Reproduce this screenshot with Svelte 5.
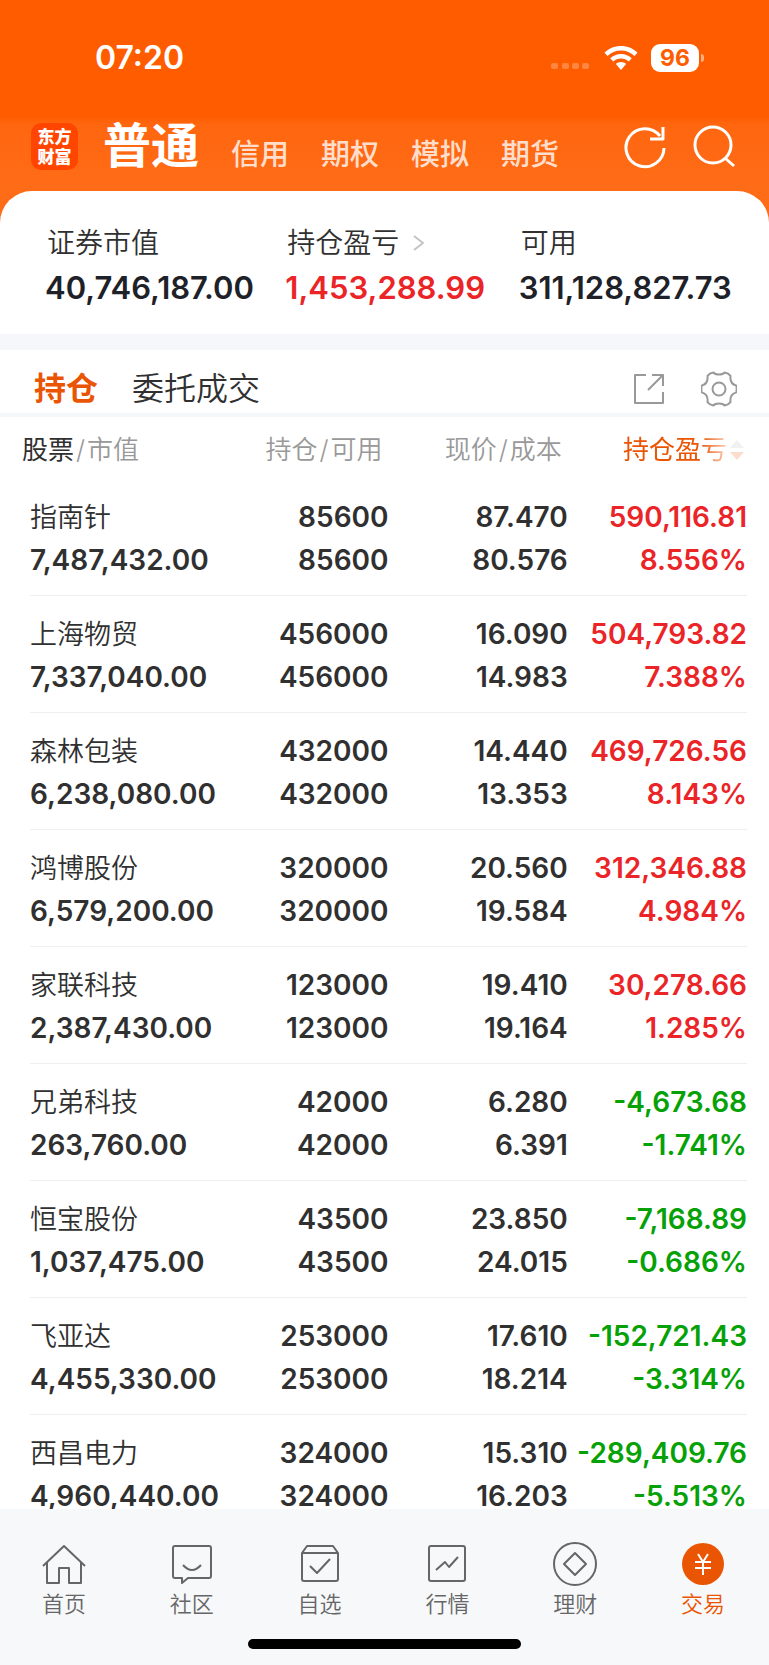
<script>
    const accounts = ["信用", "期权", "模拟", "期货"];

    const holdings = [
        { name: "指南针", value: "7,487,432.00", held: "85600", usable: "85600", price: "87.470", cost: "80.576", profit: "590,116.81", rate: "8.556%" },
        { name: "上海物贸", value: "7,337,040.00", held: "456000", usable: "456000", price: "16.090", cost: "14.983", profit: "504,793.82", rate: "7.388%" },
        { name: "森林包装", value: "6,238,080.00", held: "432000", usable: "432000", price: "14.440", cost: "13.353", profit: "469,726.56", rate: "8.143%" },
        { name: "鸿博股份", value: "6,579,200.00", held: "320000", usable: "320000", price: "20.560", cost: "19.584", profit: "312,346.88", rate: "4.984%" },
        { name: "家联科技", value: "2,387,430.00", held: "123000", usable: "123000", price: "19.410", cost: "19.164", profit: "30,278.66", rate: "1.285%" },
        { name: "兄弟科技", value: "263,760.00", held: "42000", usable: "42000", price: "6.280", cost: "6.391", profit: "-4,673.68", rate: "-1.741%" },
        { name: "恒宝股份", value: "1,037,475.00", held: "43500", usable: "43500", price: "23.850", cost: "24.015", profit: "-7,168.89", rate: "-0.686%" },
        { name: "飞亚达", value: "4,455,330.00", held: "253000", usable: "253000", price: "17.610", cost: "18.214", profit: "-152,721.43", rate: "-3.314%" },
        { name: "西昌电力", value: "4,960,440.00", held: "324000", usable: "324000", price: "15.310", cost: "16.203", profit: "-289,409.76", rate: "-5.513%" },
    ];

    const navItems = [
        { label: "首页", paths: ["M1 24 22 4l21 20", "M5 20v21h12V26h10v15h12V20"] },
        { label: "社区", paths: ["M5 4h34q2 0 2 2v28q0 2-2 2H18l-6 5v-5H5q-2 0-2-2V6q0-2 2-2z", "M13 23q9 10 18 0"] },
        { label: "自选", paths: ["M4 11h36v26q0 2-2 2H6q-2 0-2-2V11l5-7h26l5 7", "M12 24l7 7 13-14"] },
        { label: "行情", paths: ["M6 4h32q2 0 2 2v31q0 2-2 2H6q-2 0-2-2V6q0-2 2-2z", "M11 28l9-8 4 5 9-10"] },
        { label: "理财", paths: ["M22 1a21 21 0 1 1 0 42a21 21 0 1 1 0-42z", "M22 11l11 11-11 11-11-11z"] },
        { label: "交易", paths: ["M17 12l5 8 5-8M22 20v13M14 20h16M14 26h16"], active: true },
    ];
</script>

<div class="app">
    <header class="top">
        <div class="status">
            <span class="time">07:20</span>
            <div class="status-icons">
                <svg class="dots" width="40" height="24" viewBox="0 0 40 24">
                    <rect x="0" y="17" width="7" height="6" rx="2" />
                    <rect x="11" y="17" width="7" height="6" rx="2" />
                    <rect x="21" y="17" width="7" height="6" rx="2" />
                    <rect x="31" y="17" width="7" height="6" rx="2" />
                </svg>
                <svg class="wifi" width="34" height="24" viewBox="0 0 34 24">
                    <path d="M17 0C10.500 0 4.500 2.500 .5 6.700L3.500 9.900C7 6.400 11.700 4.400 17 4.400s10 2 13.500 5.500l3-3.200C29.500 2.500 23.500 0 17 0z" />
                    <path d="M17 8c-4.200 0-8 1.600-10.800 4.300l3.100 3.100c2-1.900 4.700-3 7.700-3s5.700 1.100 7.700 3l3.100-3.100C25 9.600 21.200 8 17 8z" />
                    <path d="M17 16c-2 0-3.700.7-5.100 1.900L17 24l5.100-6.100C20.700 16.700 19 16 17 16z" />
                </svg>
                <div class="battery">96</div>
            </div>
        </div>

        <nav class="accounts">
            <div class="logo"><span>东方</span><span>财富</span></div>
            <a href="#normal" class="current">普通</a>
            {#each accounts as account}
                <a href="#{account}">{account}</a>
            {/each}
            <div class="tools">
                <button aria-label="刷新">
                    <svg width="44" height="44" viewBox="0 0 44 44">
                        <path d="M41 23a19 19 0 1 1-4-12" />
                        <path d="M40 2v12H27" />
                    </svg>
                </button>
                <button aria-label="搜索">
                    <svg width="44" height="44" viewBox="0 0 44 44">
                        <circle cx="20" cy="20" r="18" />
                        <path d="M32 33l9 8" />
                    </svg>
                </button>
            </div>
        </nav>
    </header>

    <section class="summary">
        <div>
            <div class="label">证券市值</div>
            <div class="amount">40,746,187.00</div>
        </div>
        <div>
            <div class="label">
                持仓盈亏
                <svg width="12" height="18" viewBox="0 0 12 18"><path d="M1 2l9 7-9 7" /></svg>
            </div>
            <div class="amount up">1,453,288.99</div>
        </div>
        <div>
            <div class="label">可用</div>
            <div class="amount">311,128,827.73</div>
        </div>
    </section>

    <div class="tabs">
        <button class="tab active">持仓</button>
        <button class="tab">委托成交</button>
        <div class="tab-tools">
            <button aria-label="分享">
                <svg width="36" height="36" viewBox="0 0 36 36">
                    <path d="M15 4H4v28h28V21" />
                    <path d="M21 4h11v11M32 4L17 19" />
                </svg>
            </button>
            <button aria-label="设置">
                <svg width="36" height="36" viewBox="0 0 36 36">
                    <path d="M35.300 21.400C30.500 22.600 29 26.800 29.500 31.200Q27.500 33.800 23.700 34.500C21.500 31.800 14.500 31.800 12.300 34.500Q8.500 33.800 6.500 31.200C7 26.800 5.500 22.600.7 21.400Q0 18 .7 14.600C5.500 13.400 7 9.200 6.500 4.800Q8.500 2.200 12.300 1.500C14.500 4.200 21.500 4.200 23.700 1.500Q27.500 2.200 29.500 4.800C29 9.200 30.500 13.400 35.300 14.600Q36 18 35.300 21.400z" />
                    <circle cx="18" cy="18" r="6.500" />
                </svg>
            </button>
        </div>
    </div>

    <main class="list">
        <table>
            <thead>
                <tr>
                    <th><button class="first"><b>股票</b><i>/</i>市值</button></th>
                    <th><button>持仓<i>/</i>可用</button></th>
                    <th><button>现价<i>/</i>成本</button></th>
                    <th>
                        <button class="sorted">
                            持仓盈亏
                            <svg width="14" height="22" viewBox="0 0 14 22">
                                <path class="asc" d="M7 1l7 8H0z" />
                                <path class="desc" d="M7 21l7-8H0z" />
                            </svg>
                        </button>
                    </th>
                </tr>
            </thead>
            <tbody>
                {#each holdings as item}
                    <tr>
                        <td><div class="name">{item.name}</div><div>{item.value}</div></td>
                        <td><div>{item.held}</div><div>{item.usable}</div></td>
                        <td><div>{item.price}</div><div>{item.cost}</div></td>
                        <td class={item.profit.startsWith("-") ? "down" : "up"}>
                            <div>{item.profit}</div>
                            <div>{item.rate}</div>
                        </td>
                    </tr>
                {/each}
            </tbody>
        </table>
    </main>

    <footer>
        <nav class="bottom-nav">
            {#each navItems as item}
                <a href="#{item.label}" class:active={item.active}>
                    <svg width="44" height="44" viewBox="0 0 44 44">
                        {#if item.active}
                            <circle cx="22" cy="22" r="21" />
                        {/if}
                        {#each item.paths as d}
                            <path {d} />
                        {/each}
                    </svg>
                    {item.label}
                </a>
            {/each}
        </nav>
        <div class="home-bar"></div>
    </footer>
</div>

<style>
    :global(body) {
        background: #fff;
    }

    .app {
        display: flex;
        flex-direction: column;
        height: 100vh;
        overflow: hidden;
        color: #303030;
        font-family: Inter, "Noto Sans CJK SC", sans-serif;
    }

    button {
        padding: 0;
        border: 0;
        background: none;
        color: inherit;
        font: inherit;
        cursor: pointer;
    }

    a {
        color: inherit;
        text-decoration: none;
    }

    svg {
        display: block;
        flex: none;
        fill: none;
        stroke: currentColor;
        stroke-width: 2;
        stroke-linejoin: round;
    }

    .top {
        flex: none;
        padding-bottom: 32px;
        background: linear-gradient(#ff5c00 116px, #ff660f 124px, #ff6c18 191px);
        color: #fff;
    }

    .status {
        display: flex;
        align-items: center;
        justify-content: space-between;
        height: 115px;
        padding: 0 65px 0 95px;
    }

    .time {
        font-size: 32px;
        font-weight: 600;
    }

    .status-icons {
        display: flex;
        align-items: center;
        gap: 13px;
    }

    .status-icons svg {
        fill: #fff;
        stroke: none;
    }

    .status-icons .dots {
        opacity: 0.25;
    }

    .battery {
        position: relative;
        width: 48px;
        margin-right: 5px;
        border-radius: 9px;
        background: #fff;
        color: #ff5c00;
        font-size: 23px;
        font-weight: 700;
        line-height: 28px;
        text-align: center;
    }

    .battery::after {
        content: "";
        position: absolute;
        top: 10px;
        right: -5px;
        width: 3px;
        height: 8px;
        border-radius: 0 4px 4px 0;
        background: rgba(255, 255, 255, 0.5);
    }

    .accounts {
        display: flex;
        align-items: flex-end;
        gap: 32px;
        height: 60px;
        padding: 0 32px 16px 31px;
        font-size: 29px;
        line-height: 40px;
    }

    .accounts > a {
        color: rgba(255, 255, 255, 0.8);
        font-weight: 500;
    }

    .accounts > .current {
        margin-left: -7px;
        color: #fff;
        font-size: 48px;
        font-weight: 700;
        line-height: 58px;
    }

    .logo {
        display: flex;
        flex-direction: column;
        align-items: center;
        justify-content: center;
        width: 47px;
        height: 47px;
        margin-bottom: 5px;
        border-radius: 10px;
        background: #ff4500;
        font-size: 17px;
        font-weight: 900;
        line-height: 20px;
    }

    .tools {
        display: flex;
        gap: 26px;
        height: 44px;
        margin: 0 0 6px auto;
    }

    .tools svg {
        stroke-width: 3;
    }

    .summary {
        display: grid;
        flex: none;
        grid-template-columns: 240fr 233fr 218fr;
        margin-top: -32px;
        padding: 30px 32px 24px 45px;
        border-bottom: 16px solid #f6f7fa;
        border-radius: 32px 32px 0 0;
        background: #fff;
    }

    .label {
        display: flex;
        align-items: center;
        gap: 14px;
        padding-left: 2px;
        font-size: 28px;
        font-weight: 350;
        line-height: 44px;
    }

    .label svg {
        color: #c4c4c4;
    }

    .amount {
        color: #1e2228;
        font-size: 31px;
        font-weight: 600;
        line-height: 45px;
    }

    .tabs {
        display: flex;
        flex: none;
        align-items: center;
        gap: 34px;
        padding: 16px 32px 1px 34px;
        border-bottom: 4px solid #f6f7fa;
        font-size: 32px;
        font-weight: 350;
        line-height: 46px;
    }

    .tab.active {
        color: #ea5504;
        font-weight: 700;
    }

    .tab-tools {
        display: flex;
        gap: 34px;
        margin-left: auto;
        color: #999;
    }

    .list {
        flex: 1;
        min-height: 0;
        padding: 0 22px 0 30px;
        overflow: hidden;
    }

    table {
        width: 100%;
        border-collapse: collapse;
        table-layout: fixed;
        text-align: right;
    }

    th {
        width: 25%;
        padding: 4px 0 0;
        color: #999;
        font-size: 26px;
        font-weight: 350;
        text-align: right;
        vertical-align: top;
    }

    th:first-child {
        width: 30%;
        text-align: left;
    }

    th:nth-child(2) {
        width: 20%;
    }

    th button {
        display: block;
        margin: 0 6px 0 auto;
        line-height: 58px;
        white-space: nowrap;
    }

    th .first {
        margin-left: -8px;
    }

    th b {
        color: #303030;
        font-weight: 400;
    }

    th i {
        padding: 0 2px;
        font-style: normal;
    }

    th .sorted {
        display: flex;
        align-items: center;
        gap: 3px;
        margin: 0 3px 0 auto;
        color: #ea5504;
        font-weight: 400;
        mask-image: linear-gradient(to right, #000 64%, rgba(0, 0, 0, 0.2) 88%);
    }

    .sorted path {
        stroke: none;
    }

    .asc {
        fill: #bbb;
    }

    .desc {
        fill: #ea5504;
    }

    td {
        padding: 17px 0 13px;
        border-bottom: 1px solid #efefef;
        font-size: 28px;
        font-weight: 600;
        line-height: 43px;
    }

    td:first-child {
        text-align: left;
    }

    .name {
        font-size: 27px;
        font-weight: 350;
    }

    .up {
        color: #ea2427;
    }

    .down {
        color: #06a106;
    }

    footer {
        flex: none;
        padding: 33px 0 16px;
        background: #f7f8fa;
    }

    .bottom-nav {
        display: grid;
        grid-template-columns: repeat(6, 1fr);
        padding-right: 2px;
        color: #666;
        font-size: 22px;
        font-weight: 350;
        line-height: 36px;
    }

    .bottom-nav a {
        display: flex;
        flex-direction: column;
        align-items: center;
    }

    .bottom-nav .active {
        color: #ea5504;
    }

    .active circle {
        fill: #ea5504;
        stroke: none;
    }

    .active path {
        stroke: #fff;
    }

    .home-bar {
        width: 273px;
        height: 10px;
        margin: 17px auto 0;
        border-radius: 5px;
        background: #000;
    }
</style>
